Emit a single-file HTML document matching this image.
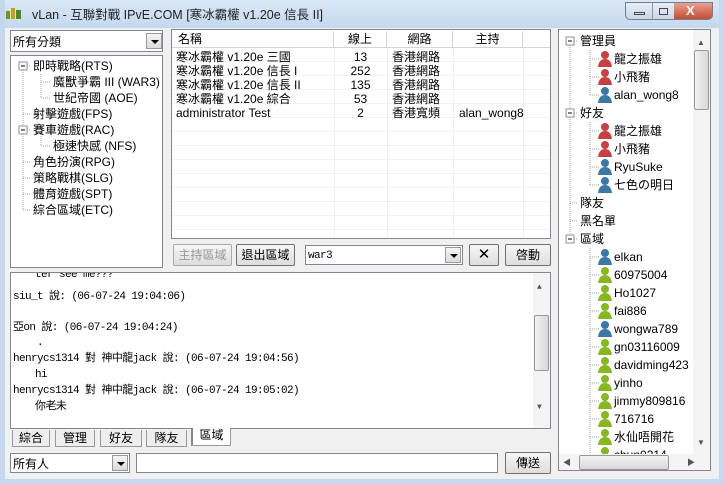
<!DOCTYPE html>
<html><head><meta charset="utf-8"><style>
*{margin:0;padding:0;box-sizing:border-box}
body{width:724px;height:484px;overflow:hidden;background:#f0f0f0;font-family:"Liberation Sans","Noto Sans CJK TC",sans-serif;font-size:12px;color:#000;position:relative}
.a{position:absolute}
.title{left:0;top:0;width:724px;height:28px;background:linear-gradient(#dbe8f6,#c4d8ee);}
.frame{left:0;top:0;width:724px;height:484px;border:5px solid #c4d8ee;border-top:none;}
.sunk{border:1px solid #828790;background:#fff}
.btn{border:1px solid #707070;background:linear-gradient(#f6f6f6,#dddddd);text-align:center;line-height:20px;border-radius:2px}
.t{white-space:nowrap;position:absolute;line-height:14px}
.dd{position:absolute;width:16px;height:16px;background:linear-gradient(#f4f4f4,#dcdcdc);border:1px solid #999}
.dd:after{content:"";position:absolute;left:4px;top:6px;border:4px solid transparent;border-top:4px solid #000;border-bottom:none}
.hd{position:absolute;top:1px;height:16px;border-right:1px solid #d5d5d5;text-align:center;line-height:16px;background:#fff}
.mono{font-family:"Liberation Mono","Noto Sans CJK TC",monospace;font-size:11px;letter-spacing:-0.6px}
.tab{position:absolute;top:430px;height:17px;border:1px solid #999;border-top:none;background:#eee;text-align:center;line-height:16px}
</style></head><body>
<div class="a title"></div>
<div class="a frame"></div>
<svg class="a" style="left:6px;top:7px" width="16" height="12"><rect x="0" y="4" width="4" height="8" fill="#6a9a20"/><rect x="5" y="1" width="4" height="11" fill="#c8a010"/><rect x="10" y="3" width="5" height="9" fill="#4a8a20"/></svg>
<div class="t" style="left:32px;top:8px;font-size:12.5px;color:#222">vLan - 互聯對戰 IPvE.COM [寒冰霸權 v1.20e 信長 II]</div>
<div class="a" style="left:625px;top:2px;width:88px;height:18px;border:1px solid #6d7f95;border-radius:0 0 5px 5px;background:linear-gradient(#e8eef6,#cbd6e4);overflow:hidden">
<div class="a" style="left:26px;top:0;width:1px;height:18px;background:#8898ad"></div>
<div class="a" style="left:48px;top:0;width:40px;height:18px;background:linear-gradient(#e8a090,#c04028)"></div>
<div class="a" style="left:8px;top:9px;width:11px;height:3px;border:1px solid #445"></div>
<div class="a" style="left:33px;top:5px;width:9px;height:7px;border:1px solid #445"></div>
<div class="t" style="left:60px;top:1px;color:#fff;font-weight:bold;font-size:13px">X</div>
</div>
<!-- left combo -->
<div class="a sunk" style="left:10px;top:30px;width:153px;height:22px"><div class="t" style="left:2px;top:4px">所有分類</div><div class="dd" style="left:135px;top:2px"></div></div>
<!-- left tree -->
<div class="a sunk" style="left:10px;top:55px;width:153px;height:213px">
<svg class="a" style="left:0;top:0" width="150" height="170"><g stroke="#a0a0a0" stroke-dasharray="1,1" fill="none"><path d="M12 10V154M12 10H20M30 18V42M30 26H40M30 42H40M12 58H20M12 74H20M30 80V90M30 90H40M12 106H20M12 122H20M12 138H20M12 154H20"/></g>
<rect x="8" y="6" width="8" height="8" fill="#fff" stroke="#919191"/><path d="M10 10H14" stroke="#000"/>
<rect x="8" y="70" width="8" height="8" fill="#fff" stroke="#919191"/><path d="M10 74H14" stroke="#000"/></svg>
<div class="t" style="left:22px;top:3px">即時戰略(RTS)</div>
<div class="t" style="left:42px;top:19px">魔獸爭霸 III (WAR3)</div>
<div class="t" style="left:42px;top:35px">世紀帝國 (AOE)</div>
<div class="t" style="left:22px;top:51px">射擊遊戲(FPS)</div>
<div class="t" style="left:22px;top:67px">賽車遊戲(RAC)</div>
<div class="t" style="left:42px;top:83px">極速快感 (NFS)</div>
<div class="t" style="left:22px;top:99px">角色扮演(RPG)</div>
<div class="t" style="left:22px;top:115px">策略戰棋(SLG)</div>
<div class="t" style="left:22px;top:131px">體育遊戲(SPT)</div>
<div class="t" style="left:22px;top:147px">綜合區域(ETC)</div>
</div>
<!-- list -->
<div class="a sunk" style="left:171px;top:29px;width:380px;height:210px;overflow:hidden">
<div class="a" style="left:0;top:0;width:380px;height:18px;border-bottom:1px solid #d5d5d5;background:#fff"></div>
<div class="hd" style="left:0;width:162px;text-align:left;padding-left:6px">名稱</div>
<div class="hd" style="left:162px;width:53px">線上</div>
<div class="hd" style="left:215px;width:66px">網路</div>
<div class="hd" style="left:281px;width:70px">主持</div>
<div class="a" style="left:0;top:18px;width:378px;height:190px;background:repeating-linear-gradient(#fff 0 13px,#f2f2f2 13px 14px)"></div>
<div class="a" style="left:162px;top:18px;width:1px;height:190px;background:#f0f0f0"></div>
<div class="a" style="left:215px;top:18px;width:1px;height:190px;background:#f0f0f0"></div>
<div class="a" style="left:281px;top:18px;width:1px;height:190px;background:#f0f0f0"></div>
<div class="a" style="left:351px;top:18px;width:1px;height:190px;background:#f0f0f0"></div>
<div class="t" style="left:4px;top:20px">寒冰霸權 v1.20e 三國</div>
<div class="t" style="left:4px;top:34px">寒冰霸權 v1.20e 信長 I</div>
<div class="t" style="left:4px;top:48px">寒冰霸權 v1.20e 信長 II</div>
<div class="t" style="left:4px;top:62px">寒冰霸權 v1.20e 綜合</div>
<div class="t" style="left:4px;top:76px">administrator Test</div>
<div class="t" style="left:162px;width:53px;text-align:center;top:20px">13</div>
<div class="t" style="left:162px;width:53px;text-align:center;top:34px">252</div>
<div class="t" style="left:162px;width:53px;text-align:center;top:48px">135</div>
<div class="t" style="left:162px;width:53px;text-align:center;top:62px">53</div>
<div class="t" style="left:162px;width:53px;text-align:center;top:76px">2</div>
<div class="t" style="left:220px;top:20px">香港網路</div>
<div class="t" style="left:220px;top:34px">香港網路</div>
<div class="t" style="left:220px;top:48px">香港網路</div>
<div class="t" style="left:220px;top:62px">香港網路</div>
<div class="t" style="left:220px;top:76px">香港寬頻</div>
<div class="t" style="left:287px;top:76px">alan_wong8</div>
</div>
<!-- buttons -->
<div class="a btn" style="left:173px;top:244px;width:59px;height:22px;color:#999;border-color:#aaa">主持區域</div>
<div class="a btn" style="left:236px;top:244px;width:59px;height:22px">退出區域</div>
<div class="a sunk" style="left:305px;top:245px;width:158px;height:20px"><div class="t mono" style="left:2px;top:3px">war3</div><div class="dd" style="left:139px;top:1px"></div></div>
<div class="a btn" style="left:469px;top:244px;width:30px;height:22px;font-size:15px">✕</div>
<div class="a btn" style="left:505px;top:244px;width:46px;height:22px">啓動</div>
<!-- chat -->
<div class="a sunk mono" style="left:10px;top:272px;width:541px;height:157px;overflow:hidden">
<div class="t" style="left:24px;top:-5px">ter see me???</div>
<div class="t" style="left:2px;top:17px">siu_t 說: (06-07-24 19:04:06)</div>
<div class="t" style="left:2px;top:48px">亞on 說: (06-07-24 19:04:24)</div>
<div class="t" style="left:26px;top:63px">.</div>
<div class="t" style="left:2px;top:79px">henrycs1314 對 神中龍jack 說: (06-07-24 19:04:56)</div>
<div class="t" style="left:24px;top:95px">hi</div>
<div class="t" style="left:2px;top:111px">henrycs1314 對 神中龍jack 說: (06-07-24 19:05:02)</div>
<div class="t" style="left:24px;top:127px">你老未</div>
<div class="a" style="left:522px;top:0;width:17px;height:155px;background:#f4f4f4"></div>
<div class="t" style="left:526px;top:8px;font-size:8px;color:#555">▲</div>
<div class="a" style="left:523px;top:42px;width:15px;height:56px;border:1px solid #999;border-radius:2px;background:linear-gradient(90deg,#f2f2f2,#d8d8d8)"></div>
<div class="t" style="left:526px;top:128px;font-size:8px;color:#555">▼</div>
</div>
<!-- tabs -->
<div class="tab" style="left:12px;width:38px">綜合</div>
<div class="tab" style="left:55px;width:40px">管理</div>
<div class="tab" style="left:100px;width:42px">好友</div>
<div class="tab" style="left:146px;width:41px">隊友</div>
<div class="tab" style="left:191px;width:40px;top:428px;background:#fff;border-left:2px solid #888;height:18px;line-height:15px">區域</div>
<!-- bottom -->
<div class="a sunk" style="left:10px;top:453px;width:120px;height:20px"><div class="t" style="left:2px;top:3px">所有人</div><div class="dd" style="left:101px;top:1px"></div></div>
<div class="a sunk" style="left:136px;top:453px;width:362px;height:20px"></div>
<div class="a btn" style="left:505px;top:452px;width:46px;height:22px">傳送</div>
<!-- right tree -->
<div class="a sunk" style="left:558px;top:29px;width:153px;height:442px;overflow:hidden">
<svg class="a" style="left:0;top:0" width="140" height="430"><g stroke="#a0a0a0" stroke-dasharray="1,1" fill="none"><path d="M11 11V210M11 11H19M31 20V66M31 29H40M31 47H40M31 65H40M11 83H19M31 92V156M31 101H40M31 119H40M31 137H40M31 155H40M11 173H19M11 191H19M11 209H19M31 218V430M31 227H40M31 245H40M31 263H40M31 281H40M31 299H40M31 317H40M31 335H40M31 353H40M31 371H40M31 389H40M31 407H40M31 425H40"/></g>
<rect x="7" y="7" width="8" height="8" fill="#fff" stroke="#919191"/><path d="M9 11H13" stroke="#000"/>
<rect x="7" y="79" width="8" height="8" fill="#fff" stroke="#919191"/><path d="M9 83H13" stroke="#000"/>
<rect x="7" y="205" width="8" height="8" fill="#fff" stroke="#919191"/><path d="M9 209H13" stroke="#000"/>
<defs><g id="p"><circle cx="8" cy="5" r="4"/><path d="M1 17Q2 9 8 9Q14 9 15 17Z"/></g></defs>
<g fill="#c84040"><use href="#p" x="38" y="20"/><use href="#p" x="38" y="38"/><use href="#p" x="38" y="92"/><use href="#p" x="38" y="110"/></g>
<g fill="#3a78a8"><use href="#p" x="38" y="56"/><use href="#p" x="38" y="128"/><use href="#p" x="38" y="146"/><use href="#p" x="38" y="218"/><use href="#p" x="38" y="290"/></g>
<g fill="#88b820"><use href="#p" x="38" y="236"/><use href="#p" x="38" y="254"/><use href="#p" x="38" y="272"/><use href="#p" x="38" y="308"/><use href="#p" x="38" y="326"/><use href="#p" x="38" y="344"/><use href="#p" x="38" y="362"/><use href="#p" x="38" y="380"/><use href="#p" x="38" y="398"/><use href="#p" x="38" y="416"/></g>
</svg>
<div class="t" style="left:21px;top:4px">管理員</div>
<div class="t" style="left:55px;top:22px">龍之振雄</div>
<div class="t" style="left:55px;top:40px">小飛豬</div>
<div class="t" style="left:55px;top:58px">alan_wong8</div>
<div class="t" style="left:21px;top:76px">好友</div>
<div class="t" style="left:55px;top:94px">龍之振雄</div>
<div class="t" style="left:55px;top:112px">小飛豬</div>
<div class="t" style="left:55px;top:130px">RyuSuke</div>
<div class="t" style="left:55px;top:148px">七色の明日</div>
<div class="t" style="left:21px;top:166px">隊友</div>
<div class="t" style="left:21px;top:184px">黑名單</div>
<div class="t" style="left:21px;top:202px">區域</div>
<div class="t" style="left:55px;top:220px">elkan</div>
<div class="t" style="left:55px;top:238px">60975004</div>
<div class="t" style="left:55px;top:256px">Ho1027</div>
<div class="t" style="left:55px;top:274px">fai886</div>
<div class="t" style="left:55px;top:292px">wongwa789</div>
<div class="t" style="left:55px;top:310px">gn03116009</div>
<div class="t" style="left:55px;top:328px">davidming423</div>
<div class="t" style="left:55px;top:346px">yinho</div>
<div class="t" style="left:55px;top:364px">jimmy809816</div>
<div class="t" style="left:55px;top:382px">716716</div>
<div class="t" style="left:55px;top:400px">水仙唔開花</div>
<div class="t" style="left:55px;top:418px">chun0214</div>
<div class="a" style="left:134px;top:0;width:17px;height:424px;background:#f4f4f4"></div>
<div class="t" style="left:138px;top:6px;font-size:8px;color:#555">▲</div>
<div class="a" style="left:135px;top:20px;width:15px;height:60px;border:1px solid #999;border-radius:2px;background:linear-gradient(90deg,#f2f2f2,#d8d8d8)"></div>
<div class="t" style="left:138px;top:406px;font-size:8px;color:#555">▼</div>
<div class="a" style="left:0;top:424px;width:151px;height:17px;background:#f4f4f4"></div>
<div class="t" style="left:4px;top:426px;font-size:8px;color:#555">◀</div>
<div class="a" style="left:20px;top:425px;width:90px;height:15px;border:1px solid #999;border-radius:2px;background:linear-gradient(#f2f2f2,#d8d8d8)"></div>
<div class="t" style="left:128px;top:426px;font-size:8px;color:#555">▶</div>
</div>
</body></html>
